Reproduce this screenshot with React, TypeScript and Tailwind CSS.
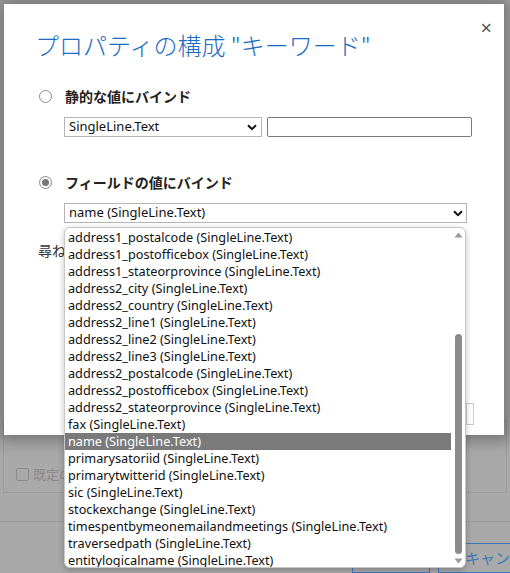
import React from 'react';

const FIELDS = [
  'address1_postalcode',
  'address1_postofficebox',
  'address1_stateorprovince',
  'address2_city',
  'address2_country',
  'address2_line1',
  'address2_line2',
  'address2_line3',
  'address2_postalcode',
  'address2_postofficebox',
  'address2_stateorprovince',
  'fax',
  'name',
  'primarysatoriid',
  'primarytwitterid',
  'sic',
  'stockexchange',
  'timespentbymeonemailandmeetings',
  'traversedpath',
  'entitylogicalname',
];

const SELECTED = 'name';

const jp = { fontFamily: '"Noto Sans CJK JP", "Noto Sans", sans-serif' };
const ui = { fontFamily: '"Noto Sans", "Noto Sans CJK JP", sans-serif' };

const Chevron = () => (
  <svg width="10" height="7" viewBox="0 0 10 7" className="shrink-0">
    <path d="M1 1.2 L5 5.2 L9 1.2" fill="none" stroke="#111" strokeWidth="2" />
  </svg>
);

const Radio = ({ checked }: { checked?: boolean }) => (
  <span className="w-[13px] h-[13px] rounded-full border border-[#8a8a8a] bg-white flex items-center justify-center shrink-0">
    {checked && <span className="w-[7px] h-[7px] rounded-full bg-[#777]" />}
  </span>
);

const RadioRow = ({ label, checked }: { label: string; checked?: boolean }) => (
  <div className="flex items-center gap-[13px] ml-[4px] h-[20px]">
    <Radio checked={checked} />
    <span className="text-[14px] leading-[20px] font-bold text-[#222]" style={jp}>{label}</span>
  </div>
);

export default function App() {
  return (
    <div className="relative w-[510px] h-[573px] overflow-hidden bg-[#a9a9a9]" style={ui}>
      {/* dimmed page underneath the dialog */}
      <div className="flex flex-col h-full">
        <div className="h-[420px] shrink-0" />
        <div className="mx-[3px] h-[77px] border border-[#9a9a9a] pl-[12px] pt-[45px]">
          <div className="flex items-center gap-[4px]">
            <span className="w-[13px] h-[13px] border border-[#8a8a8a] rounded-[2px]" />
            <span className="text-[13px] leading-[16px] text-[#8a8a8a]" style={jp}>既定の値</span>
          </div>
        </div>
        <div className="mt-[28px] border-t border-[#999]" />
        <div className="mt-[21px] flex gap-[8px] pl-[352px]">
          <div className="w-[78px] h-[30px] shrink-0 border border-[#3e78b8]" />
          <div className="w-[90px] h-[30px] shrink-0 border border-[#3e78b8] pl-[26px] pt-[3px] text-[15px] text-[#3e78b8] whitespace-nowrap" style={jp}>
            キャンセル
          </div>
        </div>
      </div>

      {/* dialog */}
      <div className="absolute left-[4px] top-[4px] w-[500px] h-[431px] bg-white shadow-[0_0_14px_6px_rgba(0,0,0,0.3)] pl-[31px] pt-[26px] flex flex-col">
        <button className="absolute right-[12px] top-[14px] text-[20px] leading-none text-[#555]">×</button>
        <h1 className="text-[24px] leading-[30px] font-light text-[#1a6cc4] whitespace-nowrap" style={jp}>
          プロパティの構成 "キーワード"
        </h1>

        <div className="mt-[26px]">
          <RadioRow label="静的な値にバインド" />
        </div>
        <div className="mt-[11px] ml-[29px] flex gap-[5px]">
          <div className="w-[198px] h-[20px] border border-[#b5b5b5] flex items-center justify-between px-[4px] text-[13px] text-[#111]">
            SingleLine.Text
            <Chevron />
          </div>
          <div className="w-[205px] h-[20px] border border-[#7a7a7a] rounded-[2px]" />
        </div>

        <div className="mt-[35px]">
          <RadioRow label="フィールドの値にバインド" checked />
        </div>
        <div className="mt-[11px] ml-[29px] w-[403px] h-[20px] border border-[#b5b5b5] flex items-center justify-between pl-[4px] pr-[3px] text-[13px] text-[#111]">
          name (SingleLine.Text)
          <Chevron />
        </div>

        <div className="mt-[17px] ml-[3px] text-[14px] leading-[20px] text-[#333]" style={jp}>尋ねる</div>
        <div className="mt-auto mb-[10px] self-end mr-[30px] w-[8px] h-[22px] border border-[#ccc]" />
      </div>

      {/* open dropdown list */}
      <div className="absolute left-[64px] top-[227px] w-[402px] h-[341px] bg-white border border-[#c8c8c8] rounded-[6px] shadow-[0_2px_6px_rgba(0,0,0,0.25)] flex overflow-hidden">
        <ul className="flex-1 pt-[1px]">
          {FIELDS.map(f => (
            <li
              key={f}
              className={
                f === SELECTED
                  ? 'h-[17px] leading-[17px] pl-[3px] text-[12.7px] whitespace-nowrap bg-[#7a7a7a] text-white'
                  : 'h-[17px] leading-[17px] pl-[3px] text-[12.7px] whitespace-nowrap text-[#111]'
              }
            >
              {f} (SingleLine.Text)
            </li>
          ))}
        </ul>
        <div className="w-[14px] flex flex-col items-center pt-[4px] pb-[3px]">
          <svg width="9" height="6" viewBox="0 0 9 6"><path d="M0.5 5.5 L4.5 0.5 L8.5 5.5 Z" fill="#9a9a9a" /></svg>
          <div className="flex-1 w-full flex flex-col items-center pt-[96px] pb-[4px]">
            <div className="flex-1 w-[7px] rounded-full bg-[#8c8c8c]" />
          </div>
          <svg width="9" height="6" viewBox="0 0 9 6"><path d="M0.5 0.5 L4.5 5.5 L8.5 0.5 Z" fill="#9a9a9a" /></svg>
        </div>
      </div>
    </div>
  );
}
